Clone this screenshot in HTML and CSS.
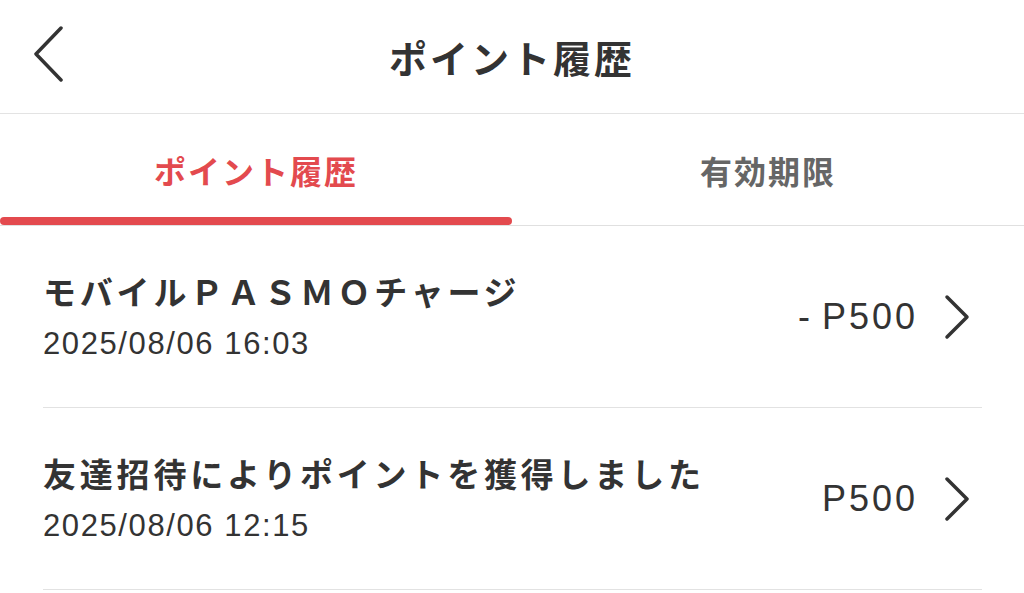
FILE: index.html
```html
<!DOCTYPE html>
<html lang="ja">
<head>
<meta charset="utf-8">
<title>ポイント履歴</title>
<link rel="stylesheet" href="styles.css">
</head>
<body>
<div class="app">
  <header class="header">
    <button class="back" aria-label="戻る">
      <svg width="30" height="56" viewBox="0 0 30 56"><polyline points="27,2 2,28 27,54" fill="none" stroke="#333" stroke-width="3.5" stroke-linecap="round" stroke-linejoin="round"/></svg>
    </button>
    <h1 class="title">ポイント履歴</h1>
    <div class="spacer"></div>
  </header>
  <nav class="tabs">
    <div class="tab active"><span class="tab-label">ポイント履歴</span><span class="tab-bar"></span></div>
    <div class="tab"><span class="tab-label">有効期限</span><span class="tab-bar"></span></div>
  </nav>
  <ul class="list">
    <li class="row">
      <div class="info">
        <div class="name">モバイルＰＡＳＭＯチャージ</div>
        <div class="date">2025/08/06 16:03</div>
      </div>
      <div class="side">
        <span class="amount"><span class="minus">-</span>P500</span>
        <svg class="chev" width="26" height="46" viewBox="0 0 26 46"><polyline points="3,3 23,23 3,43" fill="none" stroke="#333" stroke-width="3.5" stroke-linecap="round" stroke-linejoin="round"/></svg>
      </div>
    </li>
    <li class="row">
      <div class="info">
        <div class="name">友達招待によりポイントを獲得しました</div>
        <div class="date">2025/08/06 12:15</div>
      </div>
      <div class="side">
        <span class="amount">P500</span>
        <svg class="chev" width="26" height="46" viewBox="0 0 26 46"><polyline points="3,3 23,23 3,43" fill="none" stroke="#333" stroke-width="3.5" stroke-linecap="round" stroke-linejoin="round"/></svg>
      </div>
    </li>
  </ul>
</div>
</body>
</html>
```
FILE: styles.css
```css
* { box-sizing: border-box; }
html, body { margin: 0; padding: 0; background: #fff; }
body {
  font-family: "Noto Sans CJK JP", "Noto Sans", sans-serif;
  color: #333;
  width: 1024px;
  overflow: hidden;
}
.header {
  height: 114px;
  border-bottom: 1px solid #e3e3e3;
  display: grid;
  grid-template-columns: 1fr auto 1fr;
  align-items: center;
  padding-left: 34px;
}
.back {
  background: none;
  border: 0;
  padding: 0;
  margin: 0;
  width: 30px;
  height: 56px;
  display: flex;
  margin-top: -6px;
}
.title {
  margin: 0;
  font-size: 38px;
  font-weight: 700;
  letter-spacing: 3px;
  color: #333;
  line-height: 1;
  transform: translateX(-17px);
}
.tabs {
  display: grid;
  grid-template-columns: 1fr 1fr;
  height: 112px;
  border-bottom: 1px solid #e0e0e0;
}
.tab {
  display: flex;
  flex-direction: column;
  align-items: center;
}
.tab-label {
  flex: 1;
  display: flex;
  align-items: center;
  padding-top: 8px;
  font-size: 32px;
  font-weight: 700;
  letter-spacing: 2px;
  color: #666;
}
.tab-bar {
  width: 100%;
  height: 8px;
  border-radius: 4px;
}
.tab.active .tab-label { color: #e34a4e; }
.tab.active .tab-bar { background: #e34a4e; }
.list {
  list-style: none;
  margin: 0 42px 0 43px;
  padding: 0;
}
.row {
  height: 182px;
  border-bottom: 1px solid #e2e2e2;
  display: flex;
  align-items: center;
  justify-content: space-between;
  padding-right: 12px;
}
.info {
  display: flex;
  flex-direction: column;
  gap: 15px;
}
.name {
  font-size: 33px;
  font-weight: 600;
  letter-spacing: 3.8px;
  line-height: 40px;
  color: #333;
}
.date {
  font-family: "Liberation Sans", "Noto Sans CJK JP", sans-serif;
  font-size: 31px;
  letter-spacing: 1.6px;
  line-height: 36px;
  color: #333;
}
.side {
  display: flex;
  align-items: center;
  gap: 26px;
}
.amount {
  font-family: "Liberation Sans", "Noto Sans CJK JP", sans-serif;
  font-size: 36px;
  letter-spacing: 3px;
  color: #333;
}
.minus { margin-right: 9px; }
.chev { display: block; }
```
